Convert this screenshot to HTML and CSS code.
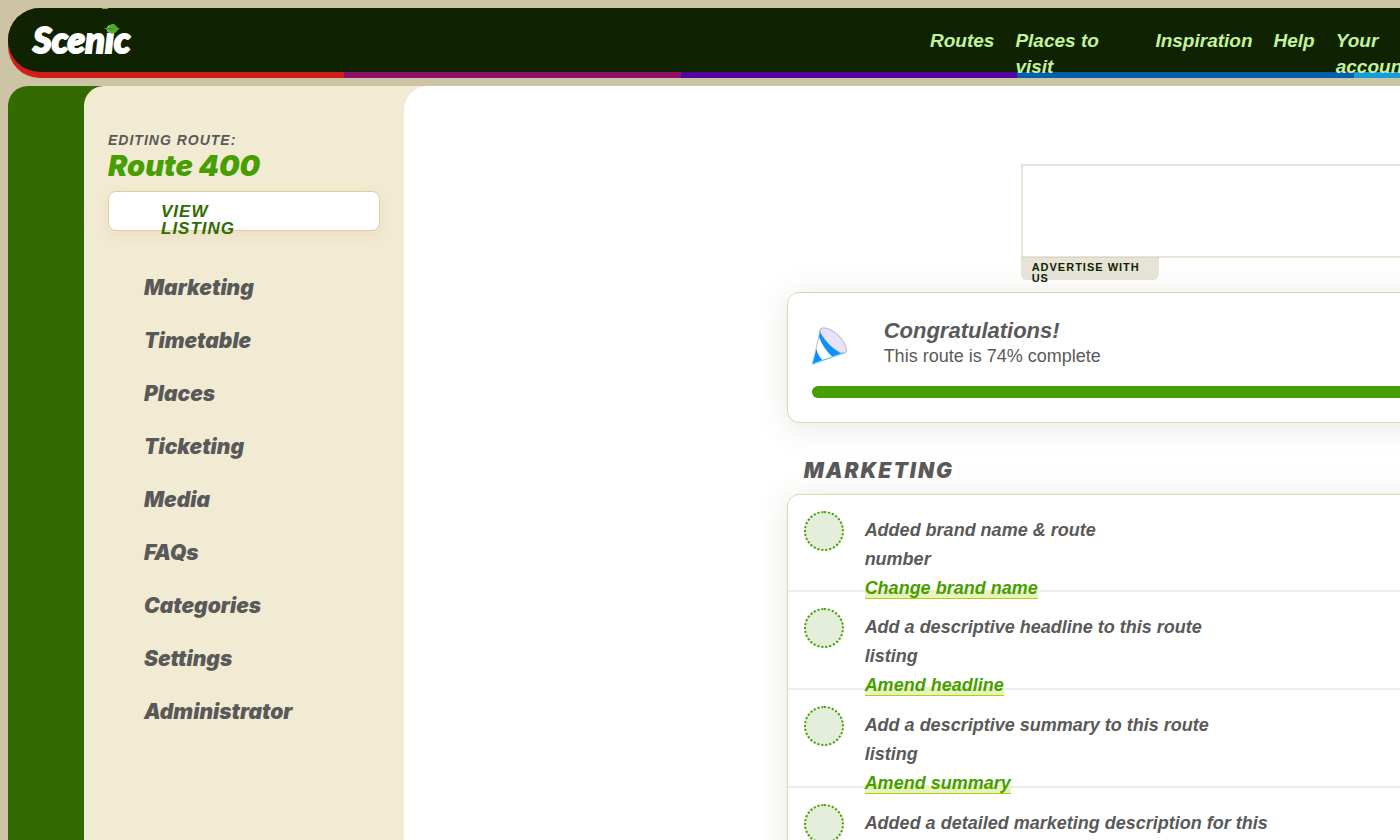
FILE: index.html
```html
<!DOCTYPE html>
<html lang="en">

<head>
    <meta charset="utf-8">
    <meta name="viewport" content="width=device-width, initial-scale=1.0">
    <title>Scenic - Route 400</title>
    <link rel="stylesheet" href="styles.css">
</head>

<body>
    <div class="page">
        <header class="header">
            <div class="header-inner">
                <a class="logo" href="#">Scenic
                    <svg class="leaf" viewBox="0 0 14 9" aria-hidden="true">
                        <path d="M0 3.500 L3 3.500 Q7 -2.500 10.500 1.500 Q11.500 3.500 14 4 Q12 5 11 7 Q7 10.500 4 7 Q3 4.500 0 4 Z" fill="#55ab2b" />
                        <path d="M3 4 L9 4.500" stroke="#2f7d18" stroke-width="0.600" />
                    </svg>
                    <span class="logo-tip"></span>
                </a>
                <nav>
                    <ul class="topnav">
                        <li><a href="#">Routes</a></li>
                        <li class="wide"><a href="#">Places to<br>visit</a></li>
                        <li><a href="#">Inspiration</a></li>
                        <li><a href="#">Help</a></li>
                        <li><a href="#">Your<br>account</a></li>
                    </ul>
                </nav>
            </div>
        </header>

        <div class="app">
            <aside class="sidebar">
                <p class="editing">Editing route:</p>
                <h1>Route 400</h1>
                <a class="view" href="#">View<br>listing</a>
                <ul class="sidenav">
                    <li><a href="#">Marketing</a></li>
                    <li><a href="#">Timetable</a></li>
                    <li><a href="#">Places</a></li>
                    <li><a href="#">Ticketing</a></li>
                    <li><a href="#">Media</a></li>
                    <li><a href="#">FAQs</a></li>
                    <li><a href="#">Categories</a></li>
                    <li><a href="#">Settings</a></li>
                    <li><a href="#">Administrator</a></li>
                </ul>
            </aside>

            <main class="main">
                <div class="advert">
                    <div class="advert-box"></div>
                    <a class="advert-link" href="#">Advertise with<br>us</a>
                </div>

                <section class="card progress-card">
                    <div class="congrats">
                        <svg class="party" viewBox="0 0 36 38" aria-hidden="true">
                            <path d="M8.500 2 L0.500 37 L33 25.500 Z" fill="#fff" stroke="#7f93b5" stroke-width="0.600" />
                            <path d="M8 4 Q14 17 29 26.500 L20 29.500 Q11 21 7 10 Z" fill="#0a91ff" />
                            <path d="M4.500 22 Q6 29 10.500 33 L0.500 37 Z" fill="#0a91ff" />
                            <path d="M0.500 37 L33 25.500" stroke="#5bc4ff" stroke-width="1" />
                            <path d="M8.500 2 C11 -1 21 2 28 10 C34 17 36 24 33 26 C28 27 20 21 14 14 C9 8 7 4 8.500 2 Z" fill="#e6e2f8" stroke="#8c8caa" stroke-width="0.600" />
                        </svg>
                        <div>
                            <h2>Congratulations!</h2>
                            <p>This route is 74% complete</p>
                        </div>
                    </div>
                    <div class="bar">
                        <div class="bar-fill" style="width: 74%"></div>
                    </div>
                </section>

                <h3>Marketing</h3>
                <ul class="card tasks">
                    <li>
                        <span class="tick"></span>
                        <p>Added brand name &amp; route<br>number<br><a href="#">Change brand name</a></p>
                    </li>
                    <li>
                        <span class="tick"></span>
                        <p>Add a descriptive headline to this route<br>listing<br><a href="#">Amend headline</a></p>
                    </li>
                    <li>
                        <span class="tick"></span>
                        <p>Add a descriptive summary to this route<br>listing<br><a href="#">Amend summary</a></p>
                    </li>
                    <li>
                        <span class="tick"></span>
                        <p>Added a detailed marketing description for this</p>
                    </li>
                </ul>
            </main>
        </div>
    </div>
</body>

</html>
```

FILE: styles.css
```css
* {
    box-sizing: border-box;
}

html {
    height: 100%;
    overflow: hidden;
}

body {
    margin: 0;
    padding: 8px 0 0 8px;
    height: 100%;
    overflow: hidden;
    background-color: #cdc3a5;
    color: #595959;
    font-family: "Liberation Sans", Arial, sans-serif;
    font-size: 18px;
}

h1,
h2,
h3,
p,
ul {
    margin: 0;
    padding: 0;
}

ul {
    list-style: none;
}

a {
    text-decoration: none;
}

/* the page is wider than the window and runs off to the right */
.page {
    display: flex;
    flex-direction: column;
    gap: 8px;
    width: 169.200%;
    height: 100%;
}

.header {
    flex: none;
    padding-bottom: 6px;
    border-radius: 32px;
    background: linear-gradient(to right,
        #d01f1a 0 14.286%,
        #8f0f6b 14.286% 28.571%,
        #5205a0 28.571% 42.857%,
        #0060ae 42.857% 57.143%,
        #189cd8 57.143% 71.429%,
        #3f9c00 71.429% 85.714%,
        #f0a800 85.714%);
}

.header-inner {
    display: flex;
    height: 64px;
    padding-left: 25px;
    border-radius: 32px;
    background-color: #0f2303;
}

.logo {
    position: relative;
    width: 99px;
    line-height: 62px;
    color: #fff;
    font-family: Lato, sans-serif;
    font-size: 36px;
    font-weight: 900;
    font-style: italic;
    -webkit-text-stroke: 2px #fff;
}

.leaf {
    position: absolute;
    left: 71px;
    top: 16px;
    width: 16px;
    height: 10px;
}

.logo-tip {
    position: absolute;
    left: 69px;
    top: 0;
    width: 6px;
    height: 1px;
    background-color: #7fb02c;
}

.topnav {
    display: flex;
    gap: 21px;
    margin-left: 57vw;
    padding-top: 20px;
    font-size: 19px;
    font-weight: bold;
    font-style: italic;
    line-height: 26px;
}

.topnav a {
    color: #c5f29a;
}

.topnav .wide {
    width: 119px;
}

.app {
    display: flex;
    flex: 1;
    padding-left: 76px;
    border-radius: 20px 0 0 0;
    background-color: #336b00;
}

.sidebar {
    width: 344px;
    flex: none;
    margin-right: -24px;
    padding: 46px 48px 0 24px;
    border-radius: 20px 0 0 0;
    background-color: #f2ebd3;
}

.editing {
    font-size: 14px;
    font-weight: bold;
    font-style: italic;
    line-height: 16px;
    letter-spacing: 1px;
    text-transform: uppercase;
}

h1,
h3,
.sidenav a {
    font-family: Inter, "Arial Black", sans-serif;
    font-weight: 900;
    font-style: italic;
}

h1 {
    padding-top: 1px;
    margin-bottom: 8px;
    color: #479e00;
    font-size: 29px;
    line-height: 34px;
}

.view {
    display: block;
    height: 40px;
    padding: 11px 0 0 52px;
    border: 1px solid #dccfa8;
    border-radius: 8px;
    background-color: #fff;
    box-shadow: 0 4px 16px rgba(200, 140, 80, .14);
    color: #336b00;
    font-size: 17px;
    font-weight: bold;
    font-style: italic;
    line-height: 17px;
    letter-spacing: 1px;
    text-transform: uppercase;
}

.sidenav {
    margin-top: 30px;
    padding-left: 36px;
}

.sidenav a {
    display: block;
    color: #595959;
    font-size: 21px;
    line-height: 53px;
}

.main {
    flex: 1;
    display: flex;
    flex-direction: column;
    align-items: center;
    padding-top: 78px;
    border-radius: 24px 0 0 0;
    background-color: #fff;
}

.advert {
    width: 726px;
    margin-bottom: 12px;
}

.advert-box {
    height: 94px;
    border: 2px solid #e8e4d8;
}

.advert-link {
    display: block;
    width: 138px;
    height: 23px;
    margin-top: -1px;
    padding: 5px 0 0 11px;
    border-radius: 0 0 6px 6px;
    background-color: rgba(205, 200, 175, .5);
    color: #0f2303;
    font-size: 11px;
    font-weight: bold;
    line-height: 11px;
    letter-spacing: 1px;
    text-transform: uppercase;
}

.card {
    width: 1194px;
    border: 1px solid #dfd5b0;
    border-radius: 12px;
    background-color: #fff;
    box-shadow: 0 4px 32px rgba(80, 70, 30, .13);
}

.advert,
.card p,
h3 {
    position: relative;
}

.progress-card {
    padding: 24px;
}

.congrats {
    display: flex;
    gap: 36px;
    height: 69px;
}

.party {
    width: 36px;
    height: 38px;
    margin-top: 10px;
}

h2 {
    font-size: 22px;
    font-style: italic;
    line-height: 27px;
}

.congrats p {
    line-height: 24px;
}

.bar {
    border-radius: 6px;
    background-color: #e3efda;
}

.bar-fill {
    height: 12px;
    border-radius: 6px;
    background-color: #479e00;
}

h3 {
    width: 1194px;
    margin-top: 34px;
    padding-left: 17px;
    font-size: 21px;
    line-height: 28px;
    letter-spacing: 2px;
    text-transform: uppercase;
}

.tasks {
    margin-top: 9px;
}

.tasks li {
    display: flex;
    gap: 21px;
    height: 98px;
    padding: 16px 16px 0;
    border-bottom: 2px solid #ececec;
}

/* the card border takes one pixel of the first row */
.tasks li:first-child {
    height: 97px;
}

.tick {
    flex: none;
    width: 40px;
    height: 40px;
    border: 2px dotted #479e00;
    border-radius: 50%;
    background-color: #e3efda;
}

.tasks p {
    padding-top: 5px;
    font-weight: bold;
    font-style: italic;
    line-height: 29px;
}

.tasks a {
    border-bottom: 1px solid #b0cf10;
    background: linear-gradient(transparent 60%, #e8f2bd 60%);
    color: #479e00;
}
```
